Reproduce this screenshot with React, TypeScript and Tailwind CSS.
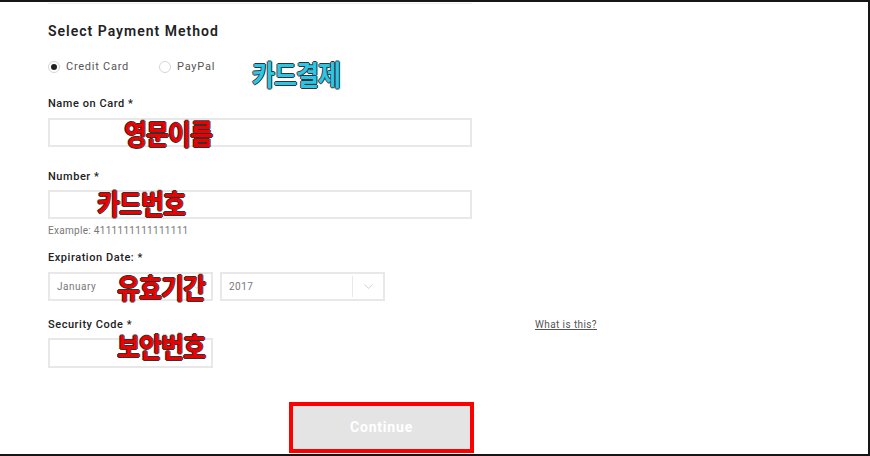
import { ChevronDown } from "lucide-react";

const font = { fontFamily: "Roboto, 'Liberation Sans', sans-serif" };

function Label({ children }: { children: React.ReactNode }) {
  return (
    <div className="text-[11px] leading-[14px] font-medium tracking-[0.55px] text-[#222]">{children}</div>
  );
}

function Radio({ checked, label }: { checked?: boolean; label: string }) {
  return (
    <label className="flex items-center gap-[6px]">
      <span className="flex h-[12px] w-[12px] items-center justify-center rounded-full border border-[#d6d6d6] bg-white">
        {checked && <span className="h-[6px] w-[6px] rounded-full bg-[#222]" />}
      </span>
      <span className="text-[11px] leading-[14px] tracking-[0.75px] text-[#555]">{label}</span>
    </label>
  );
}

function Select({ value }: { value: string }) {
  return (
    <div className="flex h-[29px] w-[165px] items-center border-2 border-[#e8e8e8] bg-white">
      <span className="flex-1 pl-[7px] text-[10px] tracking-[0.5px] text-[#777]">{value}</span>
      <span className="h-[21px] w-px bg-[#e8e8e8]" />
      <span className="flex w-[30px] justify-center text-[#b5b5b5]">
        <ChevronDown size={15} strokeWidth={1} />
      </span>
    </div>
  );
}

// annotation text painted over the screenshot
function Note({ text, color, className }: { text: string; color: string; className: string }) {
  return (
    <span
      className={`absolute origin-top scale-y-[1.12] text-[25px] leading-none font-bold tracking-[-1px] [text-shadow:1px_0_#333,-1px_0_#333,0_1px_#333,0_-1px_#333] ${className}`}
      style={{ color, fontFamily: "'Noto Sans CJK KR', sans-serif" }}
    >
      {text}
    </span>
  );
}

export default function App() {
  return (
    <div
      className="relative h-[456px] w-[870px] overflow-hidden border-t-2 border-r-2 border-b-2 border-[#161616] bg-white"
      style={font}
    >
      <div className="flex flex-col pl-12">
        <div className="mt-px h-px w-[424px] bg-[#efefef]" />
        <h2 className="mt-[18px] text-[14px] leading-[18px] font-semibold tracking-[1px] text-[#222]">
          Select Payment Method
        </h2>

        <div className="mt-[20px] flex h-[14px] items-center gap-[30px]">
          <Radio checked label="Credit Card" />
          <Radio label="PayPal" />
        </div>

        <div className="mt-[23px]">
          <Label>Name on Card *</Label>
        </div>
        <input className="mt-[7px] h-[29px] w-[424px] border-2 border-[#e8e8e8] outline-none" />

        <div className="mt-[23px]">
          <Label>Number *</Label>
        </div>
        <input className="mt-[6px] h-[29px] w-[424px] border-2 border-[#e8e8e8] outline-none" />
        <div className="mt-[5px] text-[10px] leading-[13px] tracking-[0.3px] text-[#777]">
          Example: 4111111111111111
        </div>

        <div className="mt-[14px]">
          <Label>Expiration Date: *</Label>
        </div>
        <div className="mt-[7px] flex gap-[7px]">
          <Select value="January" />
          <Select value="2017" />
        </div>

        <div className="mt-[17px] flex w-[549px] items-center justify-between">
          <Label>Security Code *</Label>
          <a className="text-[10px] leading-[14px] tracking-[0.4px] text-[#555] underline">What is this?</a>
        </div>
        <input className="mt-[6px] h-[30px] w-[165px] border-2 border-[#e8e8e8] outline-none" />

        <div className="mt-[34px] ml-[241px] w-[185px] border-4 border-[#ff0000]">
          <button className="h-[43px] w-full bg-[#e4e4e4] text-[14px] font-bold tracking-[0.8px] text-white">
            Continue
          </button>
        </div>
      </div>

      <Note text="카드결제" color="#2ac6e6" className="left-[252px] top-[58px]" />
      <Note text="영문이름" color="#ee0000" className="left-[124px] top-[117px]" />
      <Note text="카드번호" color="#ee0000" className="left-[97px] top-[187px]" />
      <Note text="유효기간" color="#ee0000" className="left-[117px] top-[271px]" />
      <Note text="보안번호" color="#ee0000" className="left-[117px] top-[330px]" />
    </div>
  );
}
